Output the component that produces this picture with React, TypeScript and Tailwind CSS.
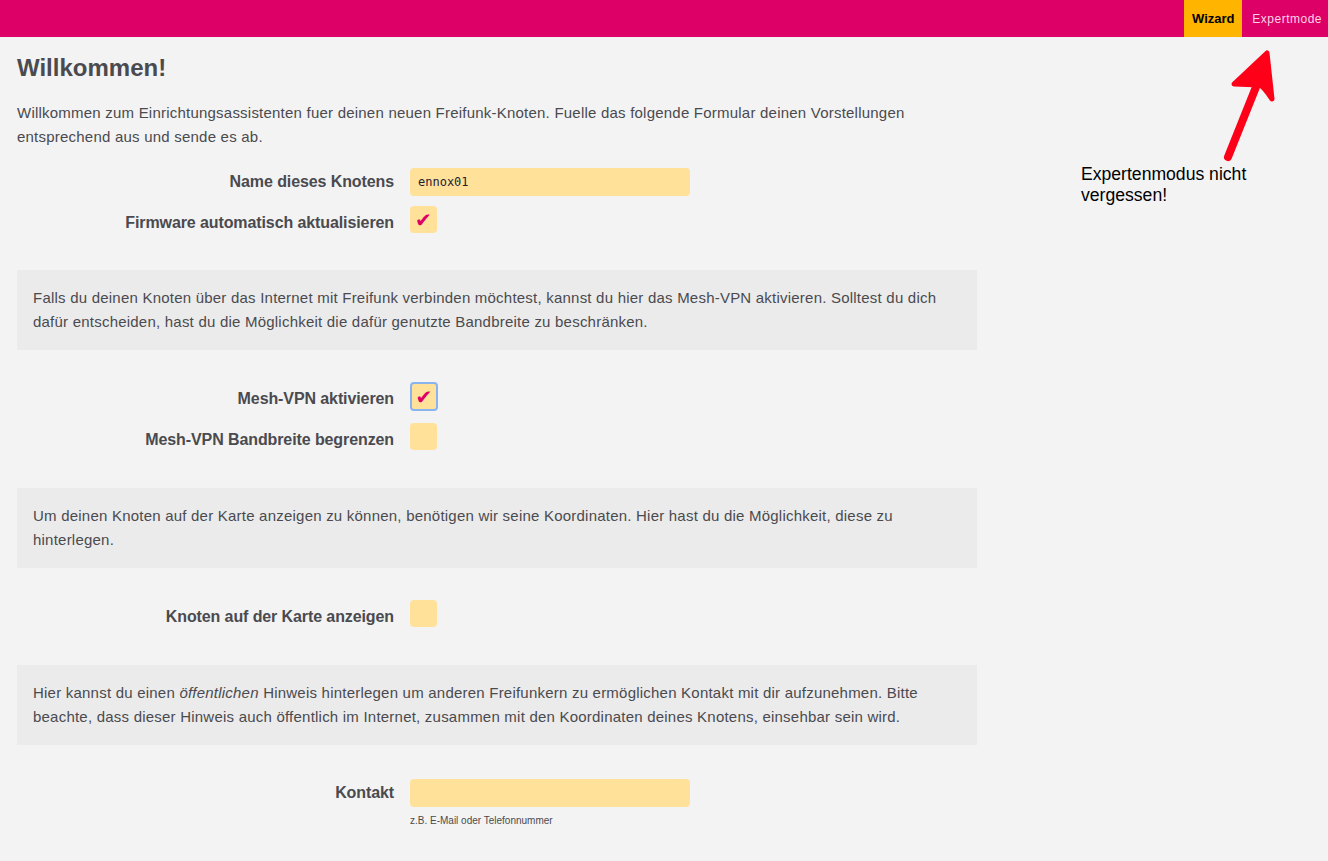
import React from 'react'

const font = { fontFamily: '"Liberation Sans", Arial, sans-serif' }

export default function App() {
  return (
    <div className="min-h-[861px] bg-[#f3f3f3] text-[#4a4a4f]" style={font}>
      {/* top bar */}
      <div className="h-[37px] bg-[#dc0067] flex justify-end items-stretch">
        <div className="bg-[#ffb400] text-black font-bold text-[13px] flex items-center w-[58px] justify-center">
          Wizard
        </div>
        <div className="text-[#ffd3e6] text-[12px] tracking-[0.5px] flex items-center pl-[10px] pr-[6px]">
          Expertmode
        </div>
      </div>

      <div className="flex">
        <div className="w-[960px] ml-[17px] flex-none">
          <h1 className="text-[24px] font-bold mt-[17px] leading-[28px]">Willkommen!</h1>
          <p className="text-[15px] leading-[24px] mt-[19px] tracking-[0.22px]">
            Willkommen zum Einrichtungsassistenten fuer deinen neuen Freifunk-Knoten. Fuelle das folgende Formular deinen Vorstellungen entsprechend aus und sende es ab.
          </p>

          <div className="mt-[19px] flex flex-col gap-[10px]">
            <InputRow label="Name dieses Knotens" value="ennox01" />
            <CheckRow label="Firmware automatisch aktualisieren" checked />
          </div>

          <InfoBox className="mt-[37px]">
            Falls du deinen Knoten über das Internet mit Freifunk verbinden möchtest, kannst du hier das Mesh-VPN aktivieren. Solltest du dich dafür entscheiden, hast du die Möglichkeit die dafür genutzte Bandbreite zu beschränken.
          </InfoBox>

          <div className="mt-[32px] flex flex-col gap-[12px]">
            <CheckRow label="Mesh-VPN aktivieren" checked focused />
            <CheckRow label="Mesh-VPN Bandbreite begrenzen" />
          </div>

          <InfoBox className="mt-[38px]">
            Um deinen Knoten auf der Karte anzeigen zu können, benötigen wir seine Koordinaten. Hier hast du die Möglichkeit, diese zu hinterlegen.
          </InfoBox>

          <div className="mt-[32px]">
            <CheckRow label="Knoten auf der Karte anzeigen" />
          </div>

          <InfoBox className="mt-[38px]">
            Hier kannst du einen <em>öffentlichen</em> Hinweis hinterlegen um anderen Freifunkern zu ermöglichen Kontakt mit dir aufzunehmen. Bitte beachte, dass dieser Hinweis auch öffentlich im Internet, zusammen mit den Koordinaten deines Knotens, einsehbar sein wird.
          </InfoBox>

          <div className="mt-[34px]">
            <InputRow label="Kontakt" value="" />
            <div className="ml-[393px] mt-[8px] text-[10px] leading-[12px] text-[#4a4a4f]">
              z.B. E-Mail oder Telefonnummer
            </div>
          </div>
        </div>

        {/* annotation */}
        <div className="relative flex-1">
          <svg className="absolute left-[237px] top-[8px]" width="70" height="125" viewBox="0 0 70 125">
            <path d="M14 112 L46 32" stroke="#ff0019" strokeWidth="8" strokeLinecap="round" fill="none" />
            <path d="M20 39 L53 8 L58 54 Q50 42 46 40 Z" fill="#ff0019" stroke="#ff0019" strokeWidth="5" strokeLinejoin="round" />
          </svg>
          <div className="absolute left-[104px] top-[127px] text-black text-[17.6px] leading-[21px]">
            Expertenmodus nicht<br />vergessen!
          </div>
        </div>
      </div>
    </div>
  )
}

function InfoBox({ children, className = '' }: { children: React.ReactNode; className?: string }) {
  return (
    <div className={`bg-[#ebebeb] px-[16px] py-[16px] text-[15px] leading-[24px] tracking-[0.22px] ${className}`}>
      {children}
    </div>
  )
}

function Label({ children, check }: { children: React.ReactNode; check?: boolean }) {
  return (
    <div className={`w-[377px] flex-none text-right font-bold text-[16px] leading-[20px] tracking-[-0.1px] ${check ? 'pt-[7px]' : ''}`}>
      {children}
    </div>
  )
}

function InputRow({ label, value }: { label: string; value: string }) {
  return (
    <div className="flex items-center gap-[16px]">
      <Label>{label}</Label>
      <div
        className="w-[280px] h-[28px] rounded-[4px] bg-[#ffe19a] flex items-center px-[8px] text-[12px] text-[#223]"
        style={{ fontFamily: '"DejaVu Sans Mono", monospace' }}
      >
        {value}
      </div>
    </div>
  )
}

function CheckRow({ label, checked, focused }: { label: string; checked?: boolean; focused?: boolean }) {
  return (
    <div className="flex items-start gap-[16px]">
      <Label check>{label}</Label>
      <div
        className={`rounded-[4px] bg-[#ffe19a] flex items-center justify-center text-[#dc0067] text-[20px] leading-none ${
          focused ? 'border-2 border-[#8ab4ee] rounded-[3px] w-[28px] h-[29px]' : 'w-[27px] h-[27px]'
        }`}
        style={{ fontFamily: '"DejaVu Sans", sans-serif' }}
      >
        {checked ? '✔' : ''}
      </div>
    </div>
  )
}
